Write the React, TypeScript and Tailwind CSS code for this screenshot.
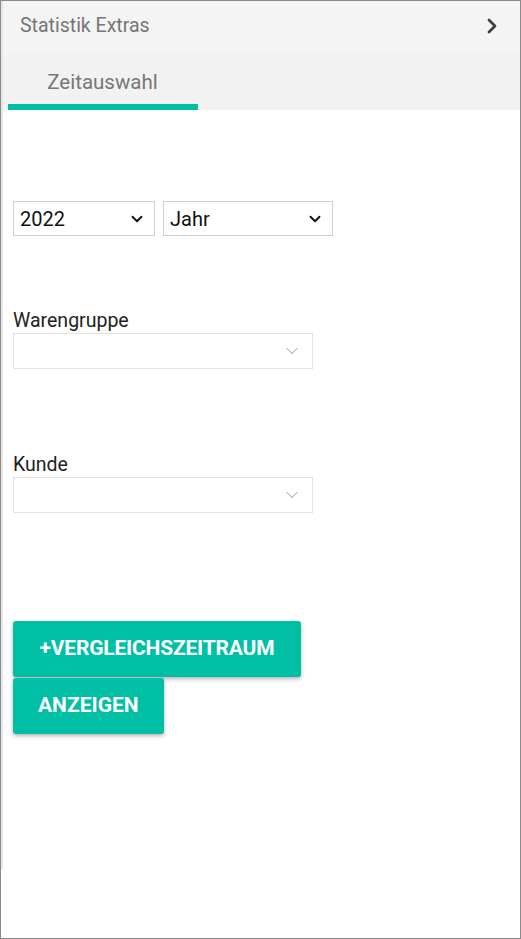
import { ChevronRight, ChevronDown } from "lucide-react";

const Field = ({ label }: { label: string }) => (
    <div className="flex flex-col">
        <span className="text-[19.5px] leading-[22px] text-[#222]">{label}</span>
        <div className="mt-[1px] w-[300px] h-[36px] border border-[#e3e3e3] bg-white flex items-center justify-end pr-[10px]">
            <ChevronDown size={20} strokeWidth={1.5} className="text-[#c4c4c4]" />
        </div>
    </div>
);

const App = () => {
    return (
        <div
            className="w-[521px] h-[939px] border border-[#8a8a8a] bg-white flex overflow-hidden"
            style={{ fontFamily: "Roboto, 'Liberation Sans', sans-serif" }}
        >
            <div className="w-[2px] h-[868px] bg-[#e6e6e6] shrink-0"></div>
            <div className="flex-1 flex flex-col">
                <div className="h-[52px] bg-[#f4f4f4] flex items-center justify-between pl-[17px] pr-[16px] pb-[2px]">
                    <span className="text-[19.5px] text-[#757575]">Statistik Extras</span>
                    <ChevronRight size={24} strokeWidth={2.75} className="text-[#404040]" />
                </div>
                <div className="h-[57px] bg-[#f2f2f2] flex items-end pl-[5px]">
                    <div className="w-[190px] h-full flex flex-col justify-end">
                        <span className="text-[20.5px] text-[#777] text-center leading-[24px] mb-[10px] pr-[1px]">Zeitauswahl</span>
                        <div className="h-[6px] bg-[#00bfa5]"></div>
                    </div>
                </div>
                <div className="pl-[10px] pt-[91px] flex flex-col">
                    <div className="flex gap-[8px]">
                        <div className="w-[142px] h-[35px] border border-[#cfcfcf] flex items-center justify-between pl-[6px] pr-[8px]">
                            <span className="text-[20px] text-[#111]">2022</span>
                            <ChevronDown size={18} strokeWidth={2.5} className="text-[#111]" />
                        </div>
                        <div className="w-[170px] h-[35px] border border-[#cfcfcf] flex items-center justify-between pl-[6px] pr-[8px]">
                            <span className="text-[20px] text-[#111]">Jahr</span>
                            <ChevronDown size={18} strokeWidth={2.5} className="text-[#111]" />
                        </div>
                    </div>
                    <div className="mt-[74px]">
                        <Field label="Warengruppe" />
                    </div>
                    <div className="mt-[85px]">
                        <Field label="Kunde" />
                    </div>
                    <div className="mt-[108px] flex flex-col items-start">
                        <button className="h-[56px] w-[288px] bg-[#00bfa5] text-white font-bold text-[21px] rounded-[3px] shadow-[0_2px_4px_rgba(0,0,0,0.3)] tracking-[-0.2px]">
                            +VERGLEICHSZEITRAUM
                        </button>
                        <button className="mt-[1px] h-[56px] px-[25px] bg-[#00bfa5] text-white font-bold text-[21px] rounded-[3px] shadow-[0_2px_4px_rgba(0,0,0,0.3)]">
                            ANZEIGEN
                        </button>
                    </div>
                </div>
            </div>
        </div>
    );
};

export default App;
